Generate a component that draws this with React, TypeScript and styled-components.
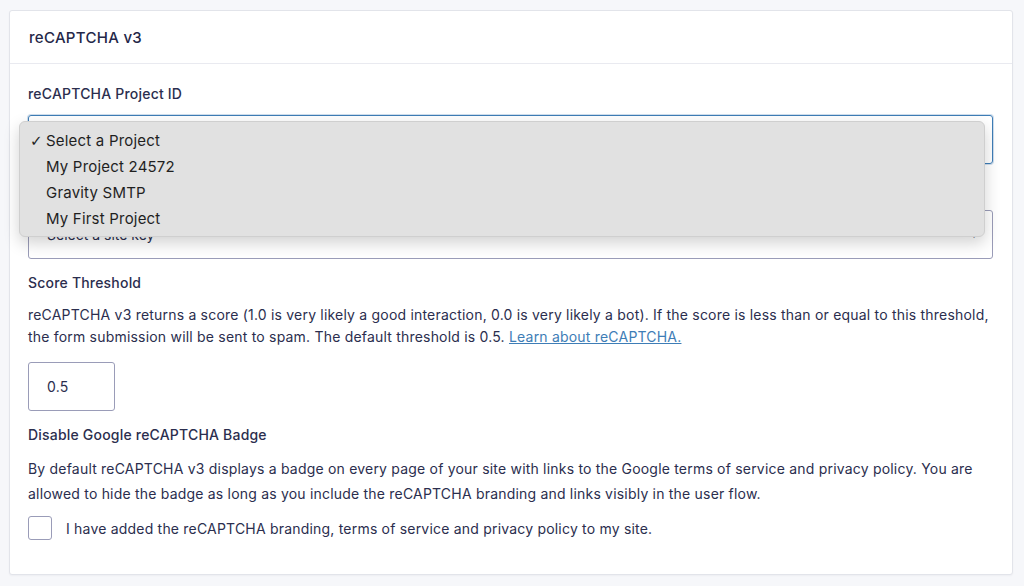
import React from "react";
import styled, { createGlobalStyle } from "styled-components";

const Global = createGlobalStyle`
  html, body { margin: 0; padding: 0; background: #f6f7fa; }
  body { font-family: Inter, "Noto Sans", "Liberation Sans", sans-serif; color: #2b2e4e; -webkit-font-smoothing: antialiased; }
  * { box-sizing: border-box; }
`;

const Page = styled.div`
  padding: 10px 11px 11px 9px;
  min-height: 586px;
`;

const Card = styled.section`
  background: #fff;
  border: 1px solid #e2e4ea;
  border-radius: 3px;
  box-shadow: 0 1px 2px rgba(20, 25, 60, 0.04);
`;

const CardHeader = styled.header`
  height: 53px;
  padding: 0 19px;
  display: flex;
  align-items: center;
  border-bottom: 1px solid #e9eaf0;
  font-size: 15px;
  font-weight: 500;
  letter-spacing: 0.3px;
  color: #242748;
`;

const CardBody = styled.div`
  padding: 20px 19px 34px 18px;
  display: flex;
  flex-direction: column;
`;

const Label = styled.div<{ $mt?: number }>`
  font-size: 14px;
  font-weight: 500;
  color: #2b2e4e;
  line-height: 20px;
  letter-spacing: 0.2px;
  margin-top: ${(p) => p.$mt ?? 0}px;
`;

const SelectWrap = styled.div`
  position: relative;
  margin-top: 11px;
`;

const SelectBox = styled.div<{ $focus?: boolean }>`
  height: 49px;
  border: 1px solid ${(p) => (p.$focus ? "#3e7db6" : "#9a9cb8")};
  border-radius: 3px;
  box-shadow: ${(p) => (p.$focus ? "0 0 0 1px rgba(62,125,182,0.25)" : "none")};
  display: flex;
  align-items: center;
  padding: 0 14px 0 18px;
  font-size: 14px;
  color: #2b2e4e;
  justify-content: space-between;
`;

const Chevron = styled.span`
  font-size: 8px;
  color: #6b6e8a;
`;

const Menu = styled.ul`
  position: absolute;
  left: -9px;
  top: 6px;
  width: 966px;
  margin: 0;
  padding: 6px 0 4px 0;
  list-style: none;
  background: #e1e1e1;
  border: 1px solid #cfcfcf;
  border-radius: 6px;
  box-shadow: 0 6px 16px rgba(0, 0, 0, 0.18);
  z-index: 5;
`;

const MenuItem = styled.li`
  position: relative;
  height: 26px;
  line-height: 26px;
  padding-left: 26px;
  font-size: 15px;
  letter-spacing: 0.2px;
  color: #1f1f1f;
`;

const Check = styled.span`
  position: absolute;
  left: 10px;
  top: 0;
  font-size: 15px;
  font-family: "DejaVu Sans", sans-serif;
`;

const Help = styled.p<{ $lh: number; $mt: number }>`
  margin: ${(p) => p.$mt}px 0 0;
  font-size: 14px;
  line-height: ${(p) => p.$lh}px;
  letter-spacing: 0.2px;
  color: #2b2e4e;
`;

const Link = styled.a`
  color: #3e7db6;
  text-decoration: underline;
`;

const NumberInput = styled.div`
  margin-top: 14px;
  width: 87px;
  height: 49px;
  border: 1px solid #9a9cb8;
  border-radius: 3px;
  display: flex;
  align-items: center;
  padding-left: 18px;
  font-size: 14px;
  letter-spacing: 0.25px;
`;

const CheckRow = styled.label`
  margin-top: 10px;
  display: flex;
  align-items: center;
  gap: 14px;
  font-size: 14px;
  letter-spacing: 0.2px;
  color: #2b2e4e;
`;

const Box = styled.span`
  width: 24px;
  height: 24px;
  border: 1px solid #9a9cb8;
  border-radius: 3px;
  background: #fff;
`;

export default function App() {
  return (
    <>
      <Global />
      <Page>
        <Card>
          <CardHeader>reCAPTCHA v3</CardHeader>
          <CardBody>
            <Label>reCAPTCHA Project ID</Label>
            <SelectWrap>
              <SelectBox $focus>
                <span />
              </SelectBox>
              <Menu>
                <MenuItem>
                  <Check>✓</Check>Select a Project
                </MenuItem>
                <MenuItem>My Project 24572</MenuItem>
                <MenuItem>Gravity SMTP</MenuItem>
                <MenuItem>My First Project</MenuItem>
              </Menu>
            </SelectWrap>
            <Label $mt={15}>reCAPTCHA Site Key</Label>
            <SelectWrap>
              <SelectBox>
                <span>Select a site key</span>
                <Chevron>▼</Chevron>
              </SelectBox>
            </SelectWrap>
            <Label $mt={14}>Score Threshold</Label>
            <Help $lh={22} $mt={11}>
              reCAPTCHA v3 returns a score (1.0 is very likely a good interaction, 0.0 is very likely a bot). If the score is less than or equal to this threshold, the form submission will be sent to spam. The default threshold is 0.5.{" "}
              <Link href="#">Learn about reCAPTCHA.</Link>
            </Help>
            <NumberInput>0.5</NumberInput>
            <Label $mt={14}>Disable Google reCAPTCHA Badge</Label>
            <Help $lh={25} $mt={11}>
              By default reCAPTCHA v3 displays a badge on every page of your site with links to the Google terms of service and privacy policy. You are allowed to hide the badge as long as you include the reCAPTCHA branding and links visibly in the user flow.
            </Help>
            <CheckRow>
              <Box />
              I have added the reCAPTCHA branding, terms of service and privacy policy to my site.
            </CheckRow>
          </CardBody>
        </Card>
      </Page>
    </>
  );
}
